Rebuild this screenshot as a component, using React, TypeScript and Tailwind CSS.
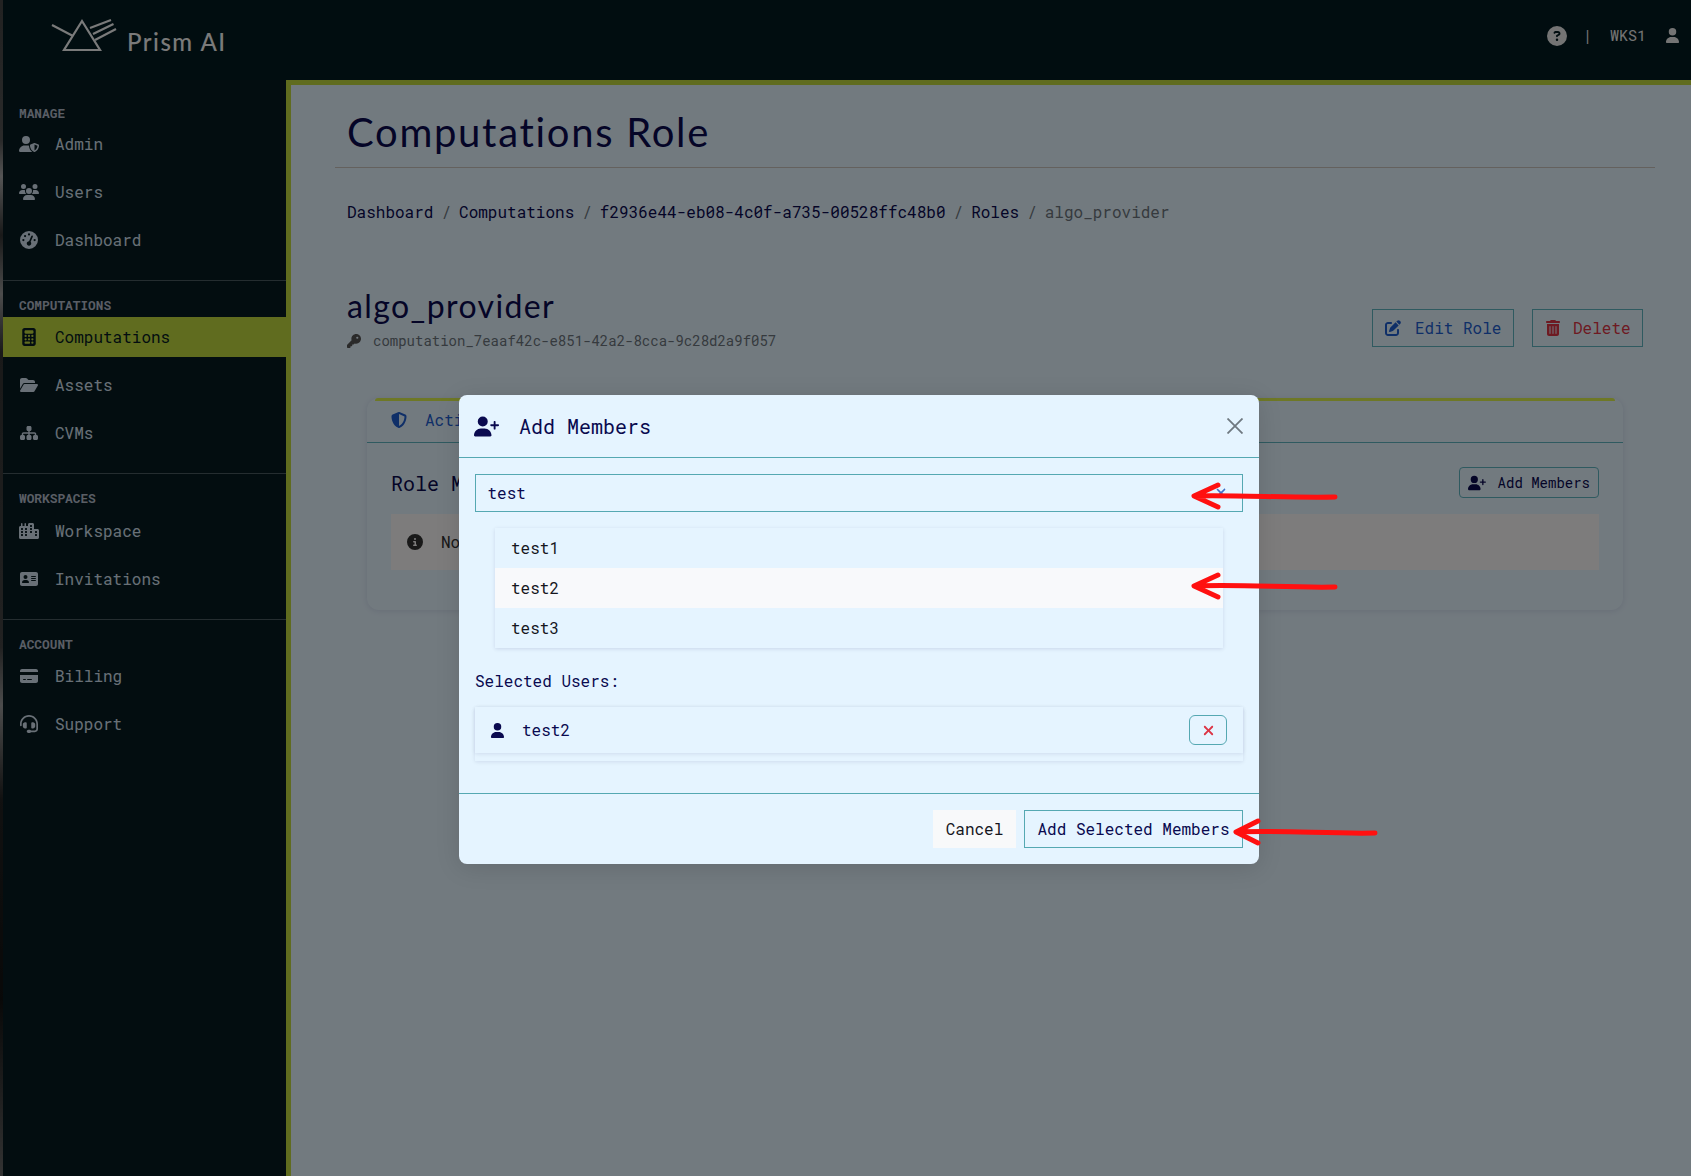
import type { ReactNode } from 'react'
import type { IconType } from 'react-icons'
import {
  FaAddressCard,
  FaCalculator,
  FaCircleInfo,
  FaCircleQuestion,
  FaCity,
  FaCreditCard,
  FaFolderOpen,
  FaGaugeHigh,
  FaHeadset,
  FaKey,
  FaPenToSquare,
  FaShieldHalved,
  FaSitemap,
  FaTrashCan,
  FaUser,
  FaUserPlus,
  FaUserShield,
  FaUsers,
  FaXmark,
} from 'react-icons/fa6'

const mono = "font-['Roboto_Mono','DejaVu_Sans_Mono','Liberation_Mono',monospace]"

interface NavItem {
  label: string
  icon: IconType
  active?: boolean
}

interface NavSection {
  title: string
  labelHeight: string
  items: NavItem[]
}

const sections: NavSection[] = [
  {
    title: 'MANAGE',
    labelHeight: 'h-[44px] pt-[25px]',
    items: [
      { label: 'Admin', icon: FaUserShield },
      { label: 'Users', icon: FaUsers },
      { label: 'Dashboard', icon: FaGaugeHigh },
    ],
  },
  {
    title: 'COMPUTATIONS',
    labelHeight: 'h-[36px] pt-[16px]',
    items: [
      { label: 'Computations', icon: FaCalculator, active: true },
      { label: 'Assets', icon: FaFolderOpen },
      { label: 'CVMs', icon: FaSitemap },
    ],
  },
  {
    title: 'WORKSPACES',
    labelHeight: 'h-[37px] pt-[16px]',
    items: [
      { label: 'Workspace', icon: FaCity },
      { label: 'Invitations', icon: FaAddressCard },
    ],
  },
  {
    title: 'ACCOUNT',
    labelHeight: 'h-[36px] pt-[16px]',
    items: [
      { label: 'Billing', icon: FaCreditCard },
      { label: 'Support', icon: FaHeadset },
    ],
  },
]

function Logo() {
  return (
    <div className="flex h-full items-start">
      <svg width="70" height="36" viewBox="0 0 70 36" fill="none" stroke="#f4f4f4" strokeWidth="2.2" className="ml-[49px] mt-[17px] shrink-0">
        <path d="M33 4 L15 33 L51 33 Z" />
        <path d="M3 8 L24 19" />
        <path d="M41 11 L62 3 M44 17 L64.5 7 M46 23 L67 12" />
      </svg>
      <span className="ml-[8px] mt-[28px] font-['Lato',sans-serif] text-[24px] font-medium leading-[28px] tracking-[1.5px] text-[#f4f4f4]">
        Prism AI
      </span>
    </div>
  )
}

function Sidebar() {
  return (
    <nav className="w-[283px] shrink-0 bg-[#061b21]">
      {sections.map((section, i) => (
        <div key={section.title} className={i < sections.length - 1 ? 'border-b border-[#4a5a60] pb-3' : ''}>
          <div className={`${section.labelHeight} pl-4 text-[12.8px] font-bold leading-[16px] text-[#b4bccb]`}>
            {section.title}
          </div>
          {section.items.map((item) => (
            <div
              key={item.label}
              className={`mb-2 flex h-10 items-center pl-4 text-base ${item.active ? 'bg-[#c0d83f] text-[#061b21]' : 'text-[#d3e0ee]'}`}
            >
              <span className="flex w-[20px] justify-center">
                <item.icon className={item.label === 'Admin' || item.label === 'Users' || item.label === 'Workspace' ? 'text-[20px]' : 'text-[18px]'} />
              </span>
              <span className="ml-4">{item.label}</span>
            </div>
          ))}
        </div>
      ))}
    </nav>
  )
}

function Crumb({ children, last }: { children: ReactNode; last?: boolean }) {
  return (
    <>
      <span className={last ? 'text-[#6c757d]' : 'text-[#0a0a4f]'}>{children}</span>
      {!last && <span className="px-2 text-[#6c757d]">/</span>}
    </>
  )
}

function OutlineButton({ icon: Icon, color, width, gap, children }: { icon: IconType; color: string; width: string; gap: string; children: ReactNode }) {
  return (
    <button type="button" className={`flex h-[38px] items-center border border-[#5fb4c0] pl-3 text-base ${width} ${color}`}>
      <Icon className={`text-[16px] ${gap}`} />
      {children}
    </button>
  )
}

function RolePage() {
  return (
    <main className="min-w-0 flex-1 border-l-[5px] border-t-[5px] border-[#c0d83f] bg-[#e5f4ff] pl-[44px] pr-[36px]">
      <div className="h-[83px] border-b border-[#c9c2bd]">
        <h1 className="pl-[12px] pt-[21px] font-['Lato',sans-serif] text-[40px] leading-[52px] tracking-[1.7px] text-[#0a0a4f]">
          Computations Role
        </h1>
      </div>
      <div className="pl-[12px] pt-[32px] text-base leading-6">
        <Crumb>Dashboard</Crumb>
        <Crumb>Computations</Crumb>
        <Crumb>f2936e44-eb08-4c0f-a735-00528ffc48b0</Crumb>
        <Crumb>Roles</Crumb>
        <Crumb last>algo_provider</Crumb>
      </div>
      <div className="flex items-start justify-between pl-[12px] pr-[12px] pt-[62px]">
        <div>
          <h2 className="font-['Lato',sans-serif] text-[32px] leading-[40px] tracking-[1.4px] text-[#0a0a4f]">algo_provider</h2>
          <div className="mt-[5px] flex items-center text-sm leading-5 text-[#6c757d]">
            <FaKey className="mr-[12px] text-[14px] text-[#555]" />
            computation_7eaaf42c-e851-42a2-8cca-9c28d2a9f057
          </div>
        </div>
        <div className="mt-[23px] flex gap-[18px]">
          <OutlineButton icon={FaPenToSquare} color="text-[#1f5fd0]" width="w-[142px]" gap="mr-[14px]">Edit Role</OutlineButton>
          <OutlineButton icon={FaTrashCan} color="text-[#dc3545]" width="w-[111px]" gap="mr-3">Delete</OutlineButton>
        </div>
      </div>
      <section className="relative ml-[32px] mr-[32px] mt-[47px] rounded-xl shadow-[0_1px_6px_rgba(10,10,80,0.1)]">
        <div className="absolute left-2 right-2 top-0 h-[3px] rounded-t-md bg-[#dcf04c]" />
        <div className="flex h-[45px] items-center border-b border-[#5fb4c0] pl-[24px] text-base text-[#1f5fd0]">
          <FaShieldHalved className="mr-[18px] text-[16px]" />
          Actions
        </div>
        <div className="flex h-[167px] flex-col px-6 pt-[24px]">
          <div className="flex items-center justify-between">
            <h3 className="mt-[1px] text-[20px] leading-[30px] text-[#0a0a4f]">Role Members</h3>
            <button type="button" className="flex h-[31px] items-center rounded-sm border border-[#5fb4c0] px-2 text-sm text-[#0a0a4f]">
              <FaUserPlus className="mr-[12px] text-[18px]" />
              Add Members
            </button>
          </div>
          <div className="mt-4 flex h-[56px] items-center bg-[#fbf9f9] pl-4 text-base text-[#333]">
            <FaCircleInfo className="mr-[18px] text-[16px]" />
            No members found
          </div>
        </div>
      </section>
    </main>
  )
}

function AddMembersModal() {
  return (
    <div className="absolute left-[459px] top-[395px] w-[800px] rounded-lg bg-[#e5f4ff] text-[#0a0a4f] shadow-[0_4px_24px_rgba(0,0,0,0.12)]">
      <div className="flex h-[63px] items-center border-b border-[#55a8b2] pl-[15px] pr-[15px]">
        <FaUserPlus className="text-[25px]" />
        <span className="ml-5 text-[20px]">Add Members</span>
        <svg width="16" height="16" viewBox="0 0 16 16" stroke="#6f7880" strokeWidth="1.8" className="ml-auto mr-[1px]">
          <path d="M0.5 0.5 L15.5 15.5 M15.5 0.5 L0.5 15.5" />
        </svg>
      </div>
      <div className="px-4 pt-4">
        <div className="flex h-[38px] items-center justify-between border border-[#55a8b2] pl-[11.5px] pr-[14px] text-base">
          test
          <FaXmark className="text-[14px] text-[#3f6fc8]" />
        </div>
        <ul className="mx-[20px] mt-4 text-base text-[#16161d] shadow-[0_1px_4px_rgba(10,10,80,0.12)]">
          <li className="flex h-10 items-center pl-4">test1</li>
          <li className="flex h-10 items-center bg-[#f8f9fb] pl-4">test2</li>
          <li className="flex h-10 items-center pl-4">test3</li>
        </ul>
        <div className="mt-[21px] text-base leading-6">Selected Users:</div>
        <div className="mt-[14px] pb-2 shadow-[0_1px_4px_rgba(10,10,80,0.1)]">
          <div className="flex h-[46px] items-center pl-[15px] pr-4 shadow-[0_1px_4px_rgba(10,10,80,0.1)]">
            <FaUser className="text-[15px]" />
            <span className="ml-[17px] text-base">test2</span>
            <button type="button" className="ml-auto flex h-[30px] w-[38px] items-center justify-center rounded-md border border-[#55a8b2]">
              <FaXmark className="text-[15px] text-[#dc3545]" />
            </button>
          </div>
        </div>
      </div>
      <div className="mt-[32px] flex h-[71px] items-start justify-end gap-2 border-t border-[#55a8b2] px-4 pt-4 text-base">
        <button type="button" className="h-[38px] w-[83px] bg-[#f8f9fa] text-[#16161d]">Cancel</button>
        <button type="button" className="h-[38px] w-[219px] border border-[#55a8b2]">Add Selected Members</button>
      </div>
    </div>
  )
}

// hand drawn red arrows from the annotated screenshot
function Annotations() {
  const arrows = [
    'M1335 497 C1290 498 1240 495 1194 496 M1218 485 L1194 496 L1218 507',
    'M1335 587 C1290 588 1240 584 1194 586 M1218 575 L1194 586 L1218 597',
    'M1375 833 C1330 834 1280 830 1236 832 M1258 821 L1236 832 L1258 843',
  ]
  return (
    <svg width="1691" height="1176" className="pointer-events-none absolute left-0 top-0" fill="none" stroke="#ff1010" strokeWidth="5" strokeLinecap="round" strokeLinejoin="round">
      {arrows.map((d) => (
        <path key={d} d={d} />
      ))}
    </svg>
  )
}

export default function App() {
  return (
    <div className={`relative flex h-screen overflow-hidden bg-[#061b21] ${mono}`}>
      <div className="w-[3px] shrink-0 bg-[linear-gradient(180deg,#444_0%,#555_12%,#aaa_15%,#333_20%,#999_25%,#333_30%,#444_55%,#999_60%,#222_68%,#111_85%,#666_100%)]" />
      <div className="flex min-w-0 flex-1 flex-col">
        <header className="flex h-20 shrink-0 bg-[#021a20]">
          <div className="-ml-[3px]">
            <Logo />
          </div>
          <div className="ml-auto flex h-[71px] items-center pr-[11px] text-[15px] text-[#e8e8e8]">
            <FaCircleQuestion className="text-[20px]" />
            <span className="ml-[16px]">|</span>
            <span className="ml-[18px]">WKS1</span>
            <FaUser className="ml-[19px] text-[15px]" />
          </div>
        </header>
        <div className="flex min-h-0 flex-1">
          <Sidebar />
          <RolePage />
        </div>
      </div>
      <div className="absolute inset-0 bg-black/50" />
      <AddMembersModal />
      <Annotations />
    </div>
  )
}
